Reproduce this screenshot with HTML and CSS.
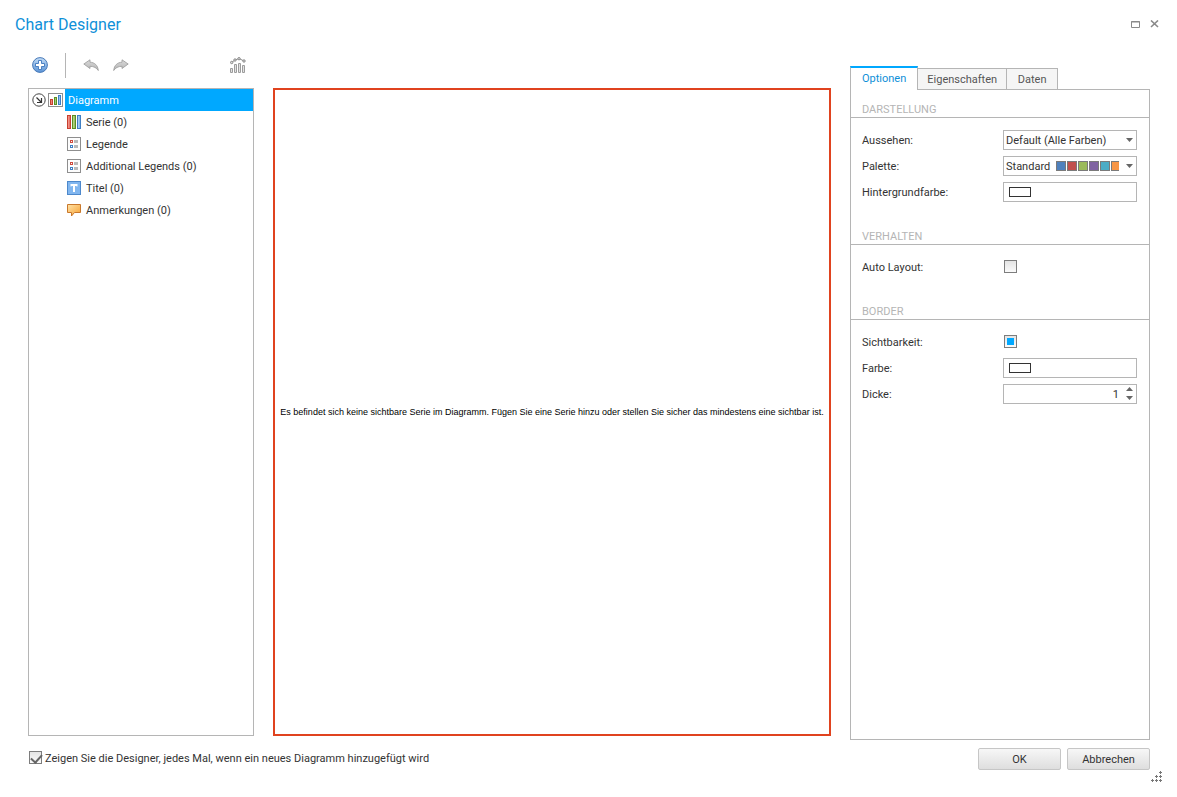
FILE: index.html
```html
<!DOCTYPE html>
<html lang="de">
<head>
<meta charset="utf-8">
<meta name="viewport" content="width=device-width,initial-scale=1.0">

<title>Chart Designer</title>

<link rel="stylesheet" href="styles.css">

</head>

<body>

<!-- shared gradients and icons -->
<svg class="defs" width="0" height="0" aria-hidden="true">
    <defs>
        <linearGradient id="g-red" x1="0" x2="1" y1="0" y2="0"><stop offset="0" stop-color="#f9b0a6"/><stop offset="1" stop-color="#e0564a"/></linearGradient>
        <linearGradient id="g-green" x1="0" x2="1" y1="0" y2="0"><stop offset="0" stop-color="#c2dd9a"/><stop offset="1" stop-color="#86b74a"/></linearGradient>
        <linearGradient id="g-blue" x1="0" x2="1" y1="0" y2="0"><stop offset="0" stop-color="#c4e0fa"/><stop offset="1" stop-color="#6ba6e4"/></linearGradient>
        <linearGradient id="g-orange" x1="0" x2="1" y1="0" y2="1"><stop offset="0" stop-color="#ffe3a8"/><stop offset="1" stop-color="#f7a030"/></linearGradient>
        <linearGradient id="g-plus" x1="0" x2="0" y1="0" y2="1"><stop offset="0" stop-color="#c3ddf7"/><stop offset="1" stop-color="#5a93d6"/></linearGradient>
        <linearGradient id="g-gray" x1="0" x2="0" y1="0" y2="1"><stop offset="0" stop-color="#d9d9d9"/><stop offset="1" stop-color="#b5b5b5"/></linearGradient>
        <symbol id="i-legend" viewBox="0 0 14 14">
            <rect x=".5" y=".5" width="13" height="13" fill="#fdfdfd" stroke="#8e8e8e"/>
            <rect x="3.500" y="3.500" width="2" height="2" fill="#fff" stroke="#cf4a3d"/>
            <rect x="3.500" y="8.500" width="2" height="2" fill="#fff" stroke="#3f7fc4"/>
            <path d="M7 3h4v3H7zM7 8h4v3H7z" fill="#b9b9b9"/>
        </symbol>
        <symbol id="i-arrow" viewBox="0 0 16 14">
            <path d="M.8 6L7 1.800v2.400c4.500.2 7.800 3 8.300 8.300C13.500 9.800 11 8.400 7 8.300v2.200z" fill="url(#g-gray)" stroke="#999" stroke-width=".8" stroke-linejoin="round"/>
        </symbol>
    </defs>
</svg>

<header class="titlebar">
    <h1>Chart Designer</h1>
    <button type="button" class="win-btn" aria-label="Maximieren">
        <svg width="9" height="7" viewBox="0 0 9 7"><path d="M.5.5h8v6h-8zM0 1h9" fill="none" stroke="#8a8a8a"/></svg>
    </button>
    <button type="button" class="win-btn" aria-label="Schließen">
        <svg width="10" height="8" viewBox="0 0 10 8"><path d="M1 .5l7 6.500M8 .5L1 7" fill="none" stroke="#8a8a8a" stroke-width="1.600"/></svg>
    </button>
</header>

<main class="designer">

    <section class="tree-col">
        <div class="toolbar">
            <button type="button" class="tool" aria-label="Hinzufügen">
                <svg width="16" height="16" viewBox="0 0 16 16"><circle cx="8" cy="8" r="7.400" fill="url(#g-plus)" stroke="#4a7ab8"/><path d="M6.500 3.500h3v3h3v3h-3v3h-3v-3h-3v-3h3z" fill="#fff" stroke="#3d76bd" stroke-width=".9"/></svg>
            </button>
            <span class="divider"></span>
            <button type="button" class="tool" aria-label="Rückgängig">
                <svg width="16" height="14"><use href="#i-arrow"/></svg>
            </button>
            <button type="button" class="tool redo" aria-label="Wiederholen">
                <svg width="16" height="14"><use href="#i-arrow"/></svg>
            </button>
            <button type="button" class="tool chart-type" aria-label="Diagrammtyp ändern">
                <svg width="16" height="16" viewBox="0 0 16 16">
                    <path d="M1.500 5.500L5 3l4-1.500 5 2.500" fill="none" stroke="#8a8a8a"/>
                    <g fill="#ddd" stroke="#8a8a8a"><circle cx="1.700" cy="5.500" r="1.200"/><circle cx="5" cy="3" r="1.200"/><circle cx="9" cy="1.700" r="1.200"/><circle cx="14" cy="4" r="1.200"/></g>
                    <path d="M.5 11.500h2v4h-2zM4.500 7.500h2v8h-2zM8.500 6.500h2v9h-2zM12.500 8.500h2v7h-2z" fill="#e2e2e2" stroke="#9c9c9c" stroke-linejoin="round"/>
                </svg>
            </button>
        </div>

        <ul class="tree">
            <li class="node root">
                <svg width="14" height="14" viewBox="0 0 14 14"><circle cx="7" cy="7" r="6.200" fill="#fff" stroke="#444"/><path d="M4.500 4.500L9 9M9.500 5v4.500H5" fill="none" stroke="#333" stroke-width="1.200"/></svg>
                <svg width="15" height="14" viewBox="0 0 15 14">
                    <rect x=".5" y=".5" width="14" height="13" fill="#fff" stroke="#8e8e8e"/>
                    <rect x="2.500" y="6.500" width="2" height="5" fill="url(#g-red)" stroke="#c8402f"/>
                    <rect x="6.500" y="4.500" width="2" height="7" fill="url(#g-green)" stroke="#5b8e25"/>
                    <rect x="10.500" y="2.500" width="2" height="9" fill="url(#g-blue)" stroke="#3f7fc4"/>
                </svg>
                <span class="selected">Diagramm</span>
            </li>
            <li class="node">
                <svg width="14" height="14" viewBox="0 0 14 14">
                    <rect x=".5" y=".5" width="3" height="13" fill="url(#g-red)" stroke="#c8402f"/>
                    <rect x="5.500" y=".5" width="3" height="13" fill="url(#g-green)" stroke="#5b8e25"/>
                    <rect x="10.500" y=".5" width="3" height="13" fill="url(#g-blue)" stroke="#3f7fc4"/>
                </svg>
                <span>Serie (0)</span>
            </li>
            <li class="node">
                <svg width="14" height="14"><use href="#i-legend"/></svg>
                <span>Legende</span>
            </li>
            <li class="node">
                <svg width="14" height="14"><use href="#i-legend"/></svg>
                <span>Additional Legends (0)</span>
            </li>
            <li class="node">
                <svg width="14" height="14" viewBox="0 0 14 14"><rect x=".5" y=".5" width="13" height="13" fill="#81b6ef" stroke="#4d88cb"/><path d="M3.500 3h7v2.500h-1V5H8v6H6V5H4.500v.5h-1z" fill="#fff"/></svg>
                <span>Titel (0)</span>
            </li>
            <li class="node">
                <svg width="14" height="14" viewBox="0 0 14 14"><path d="M.5 1.500h13v8H7.500L4.500 13V9.500h-4z" fill="url(#g-orange)" stroke="#c9782c"/></svg>
                <span>Anmerkungen (0)</span>
            </li>
        </ul>
    </section>

    <section class="preview">
        <p>Es befindet sich keine sichtbare Serie im Diagramm. Fügen Sie eine Serie hinzu oder stellen Sie sicher das mindestens eine sichtbar ist.</p>
    </section>

    <section class="props">
        <div class="tabs" role="tablist">
            <button type="button" role="tab" class="tab active" aria-selected="true">Optionen</button>
            <button type="button" role="tab" class="tab">Eigenschaften</button>
            <button type="button" role="tab" class="tab">Daten</button>
        </div>

        <div class="tab-page">
            <h2>DARSTELLUNG</h2>
            <div class="group">
                <div class="field">
                    <label for="look">Aussehen:</label>
                    <div class="editor">
                        <select id="look"><option>Default (Alle Farben)</option></select>
                        <svg class="drop" width="7" height="4"><path d="M0 0h7L3.500 4z" fill="#666"/></svg>
                    </div>
                </div>
                <div class="field">
                    <label for="palette">Palette:</label>
                    <div class="editor">
                        <select id="palette"><option>Standard</option></select>
                        <svg class="swatches" width="63" height="10" viewBox="0 0 63 10">
                            <g stroke="#7a7a7a">
                                <rect x=".5" y=".5" width="9" height="9" fill="#4f81bd"/>
                                <rect x="11.500" y=".5" width="9" height="9" fill="#c0504d"/>
                                <rect x="22.500" y=".5" width="9" height="9" fill="#9bbb59"/>
                                <rect x="33.500" y=".5" width="9" height="9" fill="#8064a2"/>
                                <rect x="44.500" y=".5" width="9" height="9" fill="#4bacc6"/>
                                <rect x="55.500" y=".5" width="9" height="9" fill="#f79646"/>
                            </g>
                        </svg>
                        <svg class="drop" width="7" height="4"><path d="M0 0h7L3.500 4z" fill="#666"/></svg>
                    </div>
                </div>
                <div class="field">
                    <label for="backcolor">Hintergrundfarbe:</label>
                    <div class="editor"><input type="color" id="backcolor" value="#ffffff"></div>
                </div>
            </div>

            <h2>VERHALTEN</h2>
            <div class="group">
                <div class="field">
                    <label for="autolayout">Auto Layout:</label>
                    <div class="editor"><input type="checkbox" id="autolayout" class="check"></div>
                </div>
            </div>

            <h2>BORDER</h2>
            <div class="group">
                <div class="field">
                    <label for="visible">Sichtbarkeit:</label>
                    <div class="editor"><input type="checkbox" id="visible" class="check tri"></div>
                </div>
                <div class="field">
                    <label for="bordercolor">Farbe:</label>
                    <div class="editor"><input type="color" id="bordercolor" value="#ffffff"></div>
                </div>
                <div class="field">
                    <label for="thickness">Dicke:</label>
                    <div class="editor">
                        <input type="number" id="thickness" value="1" min="0">
                        <svg class="spin" width="7" height="13"><path d="M0 4h7L3.500 0zM0 9h7l-3.500 4z" fill="#666"/></svg>
                    </div>
                </div>
            </div>
        </div>
    </section>

</main>

<footer class="footer">
    <label class="show-again"><input type="checkbox" class="check ticked" checked><span>Zeigen Sie die Designer, jedes Mal, wenn ein neues Diagramm hinzugefügt wird</span></label>
    <button type="button" class="btn">OK</button>
    <button type="button" class="btn">Abbrechen</button>
    <svg class="grip" width="11" height="11" viewBox="0 0 11 11"><path d="M8 1.500h3M9.500 0v3M4 5.500h3M5.500 4v3M8 5.500h3M9.500 4v3M0 9.500h3M1.500 8v3M4 9.500h3M5.500 8v3M8 9.500h3M9.500 8v3" stroke="#777"/></svg>
</footer>

<script>
/* "Sichtbarkeit" is a three-state option, it starts on default */
document.getElementById('visible').indeterminate = true;
</script>

</body>

</html>
```
FILE: styles.css
```css
* {
	box-sizing: border-box;
}

body {
	margin: 0;
	height: 100vh;
	min-height: 480px;
	display: flex;
	flex-direction: column;
	position: relative;
	background: #fff;
	color: #333;
	font-family: Roboto, sans-serif;
	font-size: 11px;
	line-height: 16px;
}

button,input,select {
	font: inherit;
	color: inherit;
}

svg {
	display: block;
	flex: none;
}

.defs {
	position: absolute;
}

/* title bar */
.titlebar {
	display: flex;
	align-items: center;
	gap: 10px;
	height: 48px;
	padding: 0 17px 0 15px;
}

.titlebar h1 {
	flex: 1;
	margin: 0;
	padding-top: 2px;
	font-size: 16px;
	font-weight: normal;
	line-height: 24px;
	color: #0f90d8;
}

.win-btn,.tool {
	padding: 0;
	border: 0;
	background: none;
}

/* three columns */
.designer {
	flex: 1;
	min-height: 0;
	display: grid;
	grid-template-columns: 226px 1fr 300px;
	gap: 19px;
	padding: 0 27px 0 28px;
}

.tree-col {
	display: flex;
	flex-direction: column;
	margin-bottom: 4px;
}

.toolbar {
	display: flex;
	align-items: center;
	gap: 14px;
	height: 40px;
	padding: 0 8px 6px 4px;
}

.divider {
	width: 1px;
	height: 25px;
	margin: 0 3px;
	background: #b5b5b5;
}

.redo svg {
	transform: scaleX(-1);
}

.chart-type {
	margin-left: auto;
}

.tree {
	flex: 1;
	margin: 0;
	padding: 0;
	list-style: none;
	border: 1px solid #b5b5b5;
}

.node {
	display: flex;
	align-items: center;
	gap: 5px;
	height: 22px;
	padding-left: 38px;
}

.node.root {
	gap: 2px;
	padding-left: 3px;
}

.node span,.field label,.show-again span {
	padding-top: 2px;
}

.node .selected {
	flex: 1;
	padding-left: 3px;
	line-height: 20px;
	background: #00a8ff;
	color: #fff;
}

.preview {
	display: flex;
	align-items: center;
	justify-content: center;
	margin: 40px 0 4px;
	border: 2px solid #e0431f;
}

.preview p {
	margin: 0;
	font-family: "Liberation Sans", Arial, sans-serif;
	font-size: 9px;
	line-height: 12px;
	color: #000;
}

/* property tabs */
.props {
	display: flex;
	flex-direction: column;
	margin-top: 18px;
}

.tabs {
	display: flex;
	align-items: flex-end;
	height: 24px;
	margin-bottom: -1px;
	z-index: 1;
}

.tab {
	min-width: 52px;
	height: 22px;
	margin-left: -1px;
	padding: 2px 9px 0;
	border: 1px solid #b5b5b5;
	background: #f5f5f5;
	color: #555;
}

.tab.active {
	height: 24px;
	margin-left: 0;
	padding: 0 11px;
	border-top: 2px solid #00a8ff;
	border-bottom: 0;
	background: #fff;
	color: #0f90d8;
}

.tab-page {
	flex: 1;
	border: 1px solid #b5b5b5;
}

.tab-page h2 {
	height: 28px;
	margin: 0;
	padding: 12px 11px 0;
	border-bottom: 1px solid #b5b5b5;
	font-size: 11px;
	font-weight: normal;
	line-height: 16px;
	color: #b5b5b5;
}

.group {
	padding: 9px 12px 12px 11px;
}

.field {
	display: flex;
	align-items: center;
	height: 26px;
}

.field label {
	flex: 1;
}

.editor {
	position: relative;
	display: flex;
	width: 134px;
}

.editor select,.editor input[type=color],.editor input[type=number] {
	-webkit-appearance: none;
	appearance: none;
	width: 100%;
	height: 20px;
	margin: 0;
	padding: 2px 2px 0;
	border: 1px solid #b5b5b5;
	border-radius: 0;
	background: #fff;
	outline: 0;
}

.editor input[type=color] {
	padding: 4px 105px 4px 5px;
}

.editor input::-webkit-color-swatch-wrapper {
	padding: 0;
}

.editor input::-webkit-color-swatch {
	border: 1px solid #333;
	border-radius: 0;
}

.editor input[type=number] {
	padding: 0 17px 0 2px;
	text-align: right;
	-moz-appearance: textfield;
}

.editor input::-webkit-inner-spin-button {
	display: none;
}

.drop,.spin,.swatches {
	position: absolute;
	pointer-events: none;
}

.drop {
	right: 4px;
	top: 8px;
}

.spin {
	right: 4px;
	top: 3px;
}

.swatches {
	left: 53px;
	top: 5px;
}

/* tick boxes */
.check {
	-webkit-appearance: none;
	appearance: none;
	width: 13px;
	height: 13px;
	margin: 0 0 1px 1px;
	border: 1px solid #7d7d7d;
	background: linear-gradient(#e4e4e4, #fafafa);
}

.check.tri:indeterminate::before {
	content: "";
	display: block;
	width: 7px;
	height: 7px;
	margin: 2px;
	background: #00a8ff;
}

.check.ticked:checked::before {
	content: "";
	display: block;
	width: 5px;
	height: 9px;
	margin: 0 0 0 3px;
	border: solid #666;
	border-width: 0 2px 2px 0;
	transform: rotate(42deg);
}

/* bottom row */
.footer {
	display: flex;
	align-items: flex-start;
	gap: 6px;
	height: 57px;
	padding: 8px 27px 0 28px;
}

.show-again {
	display: flex;
	align-items: center;
	gap: 3px;
	height: 20px;
	margin-right: auto;
}

.btn {
	width: 83px;
	height: 22px;
	padding: 2px 0 0;
	border: 1px solid #c6c6c6;
	border-radius: 2px;
	background: linear-gradient(#f7f7f7, #dedede);
}

.grip {
	position: absolute;
	right: 15px;
	bottom: 15px;
}
```
